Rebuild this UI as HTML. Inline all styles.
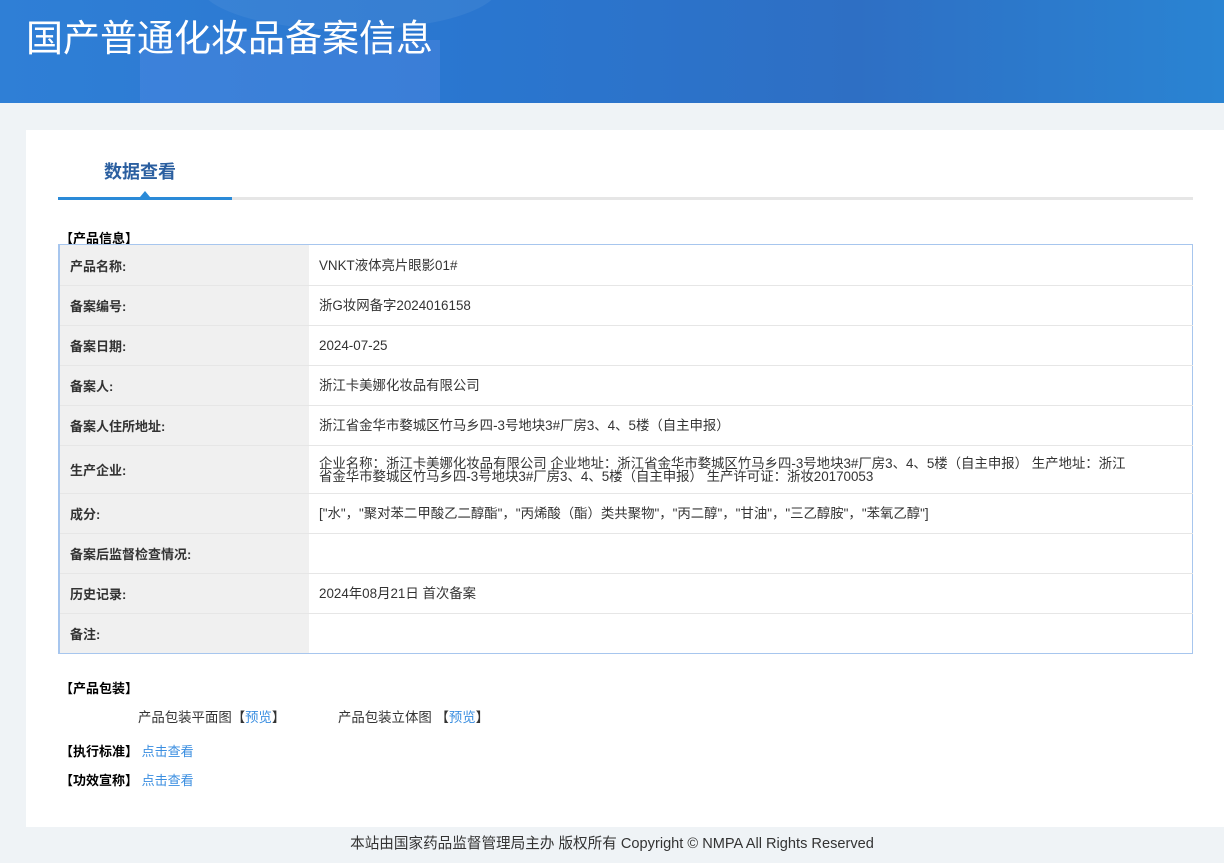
<!DOCTYPE html>
<html><head><meta charset="utf-8"><style>
*{margin:0;padding:0;box-sizing:border-box}
body{width:1224px;height:863px;background:#eff3f6;font-family:"Liberation Sans","Noto Sans CJK SC",sans-serif;font-size:13px;color:#333;position:relative;overflow:hidden}
.hd{position:absolute;left:0;top:0;width:1224px;height:103px;background:linear-gradient(90deg,#2f7fd6 0%,#2a76cf 40%,#2e6fc4 70%,#2a84d3 100%);overflow:hidden}
.hd .b1{position:absolute;left:140px;top:40px;width:300px;height:80px;background:rgba(90,140,230,.35)}
.hd .b2{position:absolute;left:200px;top:-60px;width:300px;height:90px;border-radius:50%;background:rgba(255,255,255,.06)}
.hd h1{position:absolute;left:26px;top:8px;color:#fff;font-size:37px;font-weight:normal;letter-spacing:0}
.card{position:absolute;left:26px;top:130px;width:1198px;height:697px;background:#fff}
.tab{position:absolute;left:104px;top:158px;font-size:18px;font-weight:bold;color:#2b5fa0}
.line{position:absolute;left:58px;top:197px;width:1135px;height:3px;background:#e6e6e6}
.line i{position:absolute;left:0;top:0;width:174px;height:3px;background:#2a8ad8}
.tri{position:absolute;left:140px;top:191px;width:0;height:0;border-left:5px solid transparent;border-right:5px solid transparent;border-bottom:6px solid #2a8ad8}
.sec{position:absolute;left:60px;font-weight:bold;color:#000;font-size:13px}
table{position:absolute;left:58px;top:244px;width:1135px;border-collapse:collapse;border:1px solid #a7c6ee;border-left:2px solid #a7c6ee}
td{border-top:1px solid #e6e6e6;padding:0 10px;vertical-align:middle;height:40px}
td.l{width:250px;background:#f0f0f0;font-weight:bold;color:#333}
td.v{color:#333;line-height:13px;font-size:13.4px}
a{color:#3a8ee0;text-decoration:none}
.ft{position:absolute;top:832px;left:0;width:1224px;text-align:center;font-size:14.6px;color:#333}
</style></head><body>
<div class="hd"><div class="b2"></div><div class="b1"></div><h1>国产普通化妆品备案信息</h1></div>
<div class="card"></div>
<div class="tab">数据查看</div>
<div class="line"><i></i></div><div class="tri"></div>
<div class="sec" style="top:228px">【产品信息】</div>
<table>
<tr><td class="l" style="height:41px;border-top:none">产品名称:</td><td class="v" style="border-top:none">VNKT液体亮片眼影01#</td></tr>
<tr><td class="l">备案编号:</td><td class="v">浙G妆网备字2024016158</td></tr>
<tr><td class="l">备案日期:</td><td class="v">2024-07-25</td></tr>
<tr><td class="l">备案人:</td><td class="v">浙江卡美娜化妆品有限公司</td></tr>
<tr><td class="l">备案人住所地址:</td><td class="v">浙江省金华市婺城区竹马乡四-3号地块3#厂房3、4、5楼（自主申报）</td></tr>
<tr><td class="l" style="height:48px">生产企业:</td><td class="v">企业名称：浙江卡美娜化妆品有限公司 企业地址：浙江省金华市婺城区竹马乡四-3号地块3#厂房3、4、5楼（自主申报） 生产地址：浙江<br>省金华市婺城区竹马乡四-3号地块3#厂房3、4、5楼（自主申报） 生产许可证：浙妆20170053</td></tr>
<tr><td class="l">成分:</td><td class="v">["水"，"聚对苯二甲酸乙二醇酯"，"丙烯酸（酯）类共聚物"，"丙二醇"，"甘油"，"三乙醇胺"，"苯氧乙醇"]</td></tr>
<tr><td class="l">备案后监督检查情况:</td><td class="v"></td></tr>
<tr><td class="l">历史记录:</td><td class="v">2024年08月21日 首次备案</td></tr>
<tr><td class="l">备注:</td><td class="v"></td></tr>
</table>
<div class="sec" style="top:678px">【产品包装】</div>
<div style="position:absolute;left:138px;top:706px;font-size:13.4px">产品包装平面图【<a>预览</a>】</div>
<div style="position:absolute;left:338px;top:706px;font-size:13.4px">产品包装立体图 【<a>预览</a>】</div>
<div class="sec" style="top:741px">【执行标准】 <a style="font-weight:normal">点击查看</a></div>
<div class="sec" style="top:770px">【功效宣称】 <a style="font-weight:normal">点击查看</a></div>
<div class="ft">本站由国家药品监督管理局主办 版权所有 Copyright © NMPA All Rights Reserved</div>
</body></html>
